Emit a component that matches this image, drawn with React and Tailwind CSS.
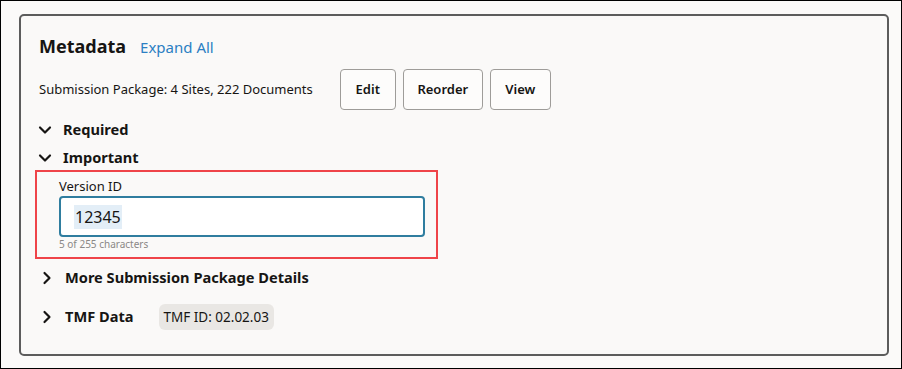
import { ChevronDown, ChevronRight } from 'lucide-react';

function Section({ open, title, children }) {
  const Icon = open ? ChevronDown : ChevronRight;
  return (
    <div className="flex items-center h-[22px]">
      <Icon className="w-[20px] h-[20px] text-[#161513]" strokeWidth={2.6} />
      <span className="ml-[8px] text-[14.6px] font-bold text-[#161513]">{title}</span>
      {children}
    </div>
  );
}

export default function App() {
  return (
    <div
      className="w-[902px] h-[369px] border border-black bg-[#fbfaf9] pt-[13px] pl-[18px]"
      style={{ fontFamily: '"Noto Sans", "Open Sans", sans-serif' }}
    >
      <div className="w-[870px] h-[342px] rounded-[5px] border-2 border-[#5c5c5c] bg-[#faf9f8] pl-[18px] pt-[17px]">
        <div className="flex items-baseline">
          <h2 className="text-[18px] font-bold text-[#161513] leading-[26px]">Metadata</h2>
          <a href="#" className="ml-[14px] text-[15px] text-[#2b7fc3]">Expand All</a>
        </div>

        <div className="mt-[10px] flex items-center">
          <span className="text-[13px] text-[#161513]">Submission Package: 4 Sites, 222 Documents</span>
          <div className="ml-[27px] flex gap-[7px]">
            <button className="h-[41px] w-[56px] rounded-[4px] border border-[#9e9c99] bg-[#fdfcfb] text-[13px] font-semibold text-[#161513]">Edit</button>
            <button className="h-[41px] w-[80px] rounded-[4px] border border-[#9e9c99] bg-[#fdfcfb] text-[13px] font-semibold text-[#161513]">Reorder</button>
            <button className="h-[41px] w-[61px] rounded-[4px] border border-[#9e9c99] bg-[#fdfcfb] text-[13px] font-semibold text-[#161513]">View</button>
          </div>
        </div>

        <div className="mt-[9px] -ml-[4px] flex flex-col gap-[6px]">
          <Section open title="Required" />
          <Section open title="Important" />
        </div>

        <div className="mt-[1px] -ml-[4px] w-[403px] h-[89px] border-2 border-[#ef4449] pl-[22px] pt-[5px]">
          <div className="text-[13px] text-[#161513] leading-[18px]">Version ID</div>
          <div className="mt-[1px] w-[366px] h-[41px] rounded-[4px] border-2 border-[#2f7d9f] bg-white flex items-center pl-[13px]">
            <span className="text-[16px] text-[#161513] bg-[#e3eef7] px-[1px]">12345</span>
          </div>
          <div className="text-[10px] text-[#8a8886] leading-[14px]">5 of 255 characters</div>
        </div>

        <div className="mt-[8px] flex flex-col gap-[17px] -ml-[2px]">
          <Section title="More Submission Package Details" />
          <Section title="TMF Data">
            <span className="ml-[25px] rounded-[6px] bg-[#e9e7e4] px-[5px] py-[3px] text-[13.5px] text-[#161513]">TMF ID: 02.02.03</span>
          </Section>
        </div>
      </div>
    </div>
  );
}
